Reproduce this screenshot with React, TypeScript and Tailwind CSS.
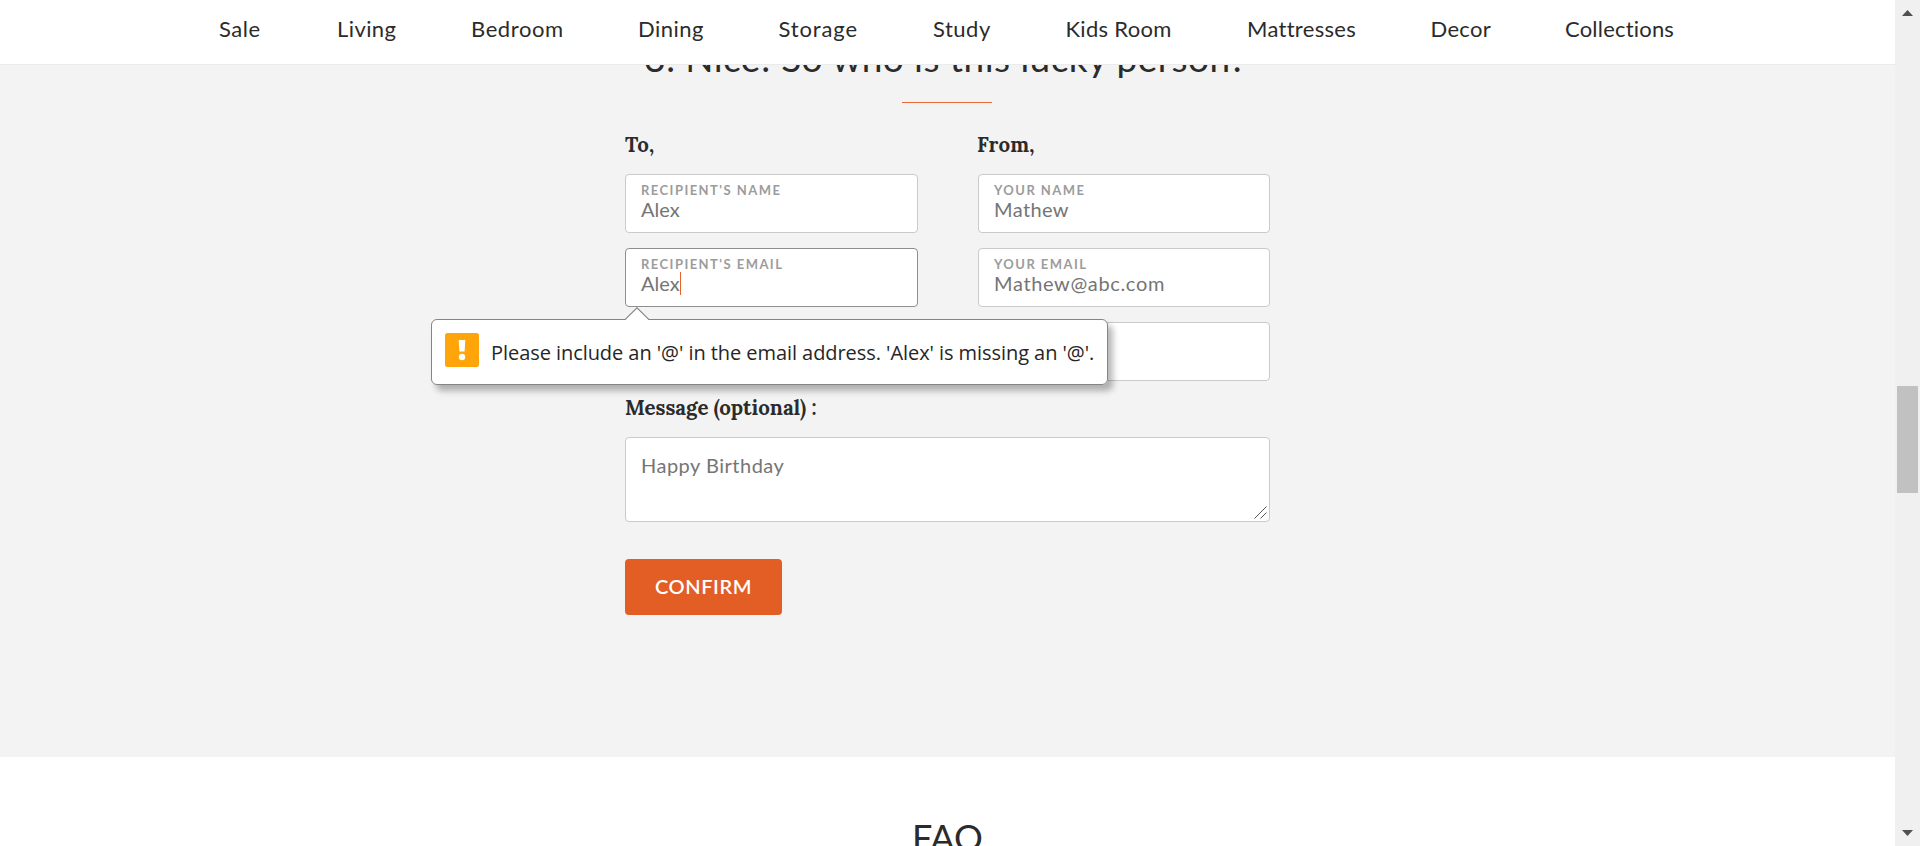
import React from "react";

const navItems = [
  { label: "Sale", cls: "w-[42px] tracking-[0.5px]" },
  { label: "Living", cls: "w-[58px] tracking-[0.4px]" },
  { label: "Bedroom", cls: "w-[91px] tracking-[0.6px]" },
  { label: "Dining", cls: "w-[64.5px] tracking-[0.5px]" },
  { label: "Storage", cls: "w-[78.5px] tracking-[0.85px]" },
  { label: "Study", cls: "w-[56.5px] tracking-[0.5px]" },
  { label: "Kids Room", cls: "w-[105.5px] tracking-[0.3px]" },
  { label: "Mattresses", cls: "w-[107.5px] tracking-[0.3px]" },
  { label: "Decor", cls: "w-[58.5px] tracking-[0.3px]" },
  { label: "Collections", cls: "w-[110px] tracking-[0.2px]" },
];

function Field({
  label,
  value,
  valueClass = "tracking-[0.4px]",
  focused = false,
  children,
}: {
  label: string;
  value: string;
  valueClass?: string;
  focused?: boolean;
  children?: React.ReactNode;
}) {
  return (
    <div
      className={`relative h-[59px] rounded-[4px] border bg-white pt-[7px] pl-[15px] ${
        focused ? "border-[#8e8e8e]" : "border-[#cacaca]"
      }`}
    >
      <div className="h-[15px] text-[13px] leading-4 font-bold tracking-[1.45px] whitespace-nowrap text-[#9c9c9c]">
        {label}
      </div>
      <div className="flex h-6 items-center text-[20px] leading-6 text-[#757575]">
        <span className={valueClass}>{value}</span>
        {focused && <span className="h-[23px] w-px bg-[#e8622c]" />}
      </div>
      {children}
    </div>
  );
}

function ValidationBubble() {
  return (
    <div className="absolute top-[70px] -left-[195px] z-20 flex h-[66px] w-[677px] items-start rounded-[6px] border border-[#858585] bg-white/[0.985] pt-[13px] pl-[13px] shadow-[5px_6px_6px_rgba(0,0,0,0.28)]">
      <svg className="absolute -top-[13px] left-[192px]" width="26" height="14" viewBox="0 0 26 14">
        <path d="M1 13.2 L13 1 L25 13.2 V14 H1 Z" fill="#fff" />
        <path d="M1 12.7 L13 0.8 L25 12.7" fill="none" stroke="#858585" strokeWidth="1.1" />
      </svg>
      <svg width="34" height="34" viewBox="0 0 34 34">
        <rect width="34" height="34" rx="2.5" fill="#ffa409" />
        <path d="M13.7 7 H20.3 L19.6 18.6 H14.4 Z" fill="#fff" />
        <circle cx="17" cy="24" r="3.2" fill="#fff" />
      </svg>
      <p className="ml-3 h-[34px] pt-[6px] font-['Open_Sans',sans-serif] text-[20px] leading-[28px] tracking-[-0.06px] whitespace-nowrap text-[#262626]">
        Please include an '@' in the email address. 'Alex' is missing an '@'.
      </p>
    </div>
  );
}

function Scrollbar() {
  return (
    <div className="flex h-full w-[25px] shrink-0 flex-col items-center bg-[#f0f0f0]">
      <svg className="mt-[10px] h-[6px] w-[11px]" viewBox="0 0 11 6">
        <path d="M0 6 L5.5 0 L11 6 Z" fill="#505050" />
      </svg>
      <div className="mt-[370px] h-[107px] w-[21px] bg-[#c1c1c1]" />
      <svg className="mt-auto mb-[10px] h-[6px] w-[11px]" viewBox="0 0 11 6">
        <path d="M0 0 L5.5 6 L11 0 Z" fill="#505050" />
      </svg>
    </div>
  );
}

export default function App() {
  return (
    <div className="flex h-[846px] w-[1920px] overflow-hidden bg-white font-[Lato,sans-serif] text-[#2b2b2b]">
      <main className="flex h-full w-[1895px] flex-col overflow-hidden">
        <nav className="relative z-10 flex h-[65px] shrink-0 gap-[76px] border-b border-[#ebebeb] bg-white pt-[15px] pl-[219px] text-[22px] leading-[28px] whitespace-nowrap">
          {navItems.map((item) => (
            <a key={item.label} className={item.cls}>
              {item.label}
            </a>
          ))}
        </nav>

        <section className="h-[692px] shrink-0 bg-[#f3f3f3]">
          <h2 className="-mt-[29px] mr-1 text-center text-[37px] leading-[44px] tracking-[0.45px]">
            3. Nice! So who is this lucky person?
          </h2>
          <div className="ml-[902px] mt-[22px] h-px w-[90px] bg-[#e8693a]" />

          <form className="mx-auto w-[645px] pt-[28px]">
            <div className="grid grid-cols-[293px_292px] justify-between">
              <div>
                <h3 className="mb-[15px] font-[Lora,serif] text-[20.5px] leading-[28px] font-bold">To,</h3>
                <div className="flex flex-col gap-[15px]">
                  <Field label="RECIPIENT'S NAME" value="Alex" valueClass="tracking-normal" />
                  <Field label="RECIPIENT'S EMAIL" value="Alex" valueClass="tracking-normal" focused>
                    <ValidationBubble />
                  </Field>
                </div>
              </div>
              <div>
                <h3 className="mb-[15px] -ml-px font-[Lora,serif] text-[20.5px] leading-[28px] font-bold tracking-[0.2px]">
                  From,
                </h3>
                <div className="flex flex-col gap-[15px]">
                  <Field label="YOUR NAME" value="Mathew" />
                  <Field label="YOUR EMAIL" value="Mathew@abc.com" valueClass="tracking-[0.65px]" />
                  <Field label="YOUR MOBILE" value="9876543210" valueClass="tracking-[-1.2px]" />
                </div>
              </div>
            </div>

            <h3 className="mt-[13px] mb-[15px] font-[Lora,serif] text-[20.5px] leading-[28px] font-bold">
              Message (optional) :
            </h3>
            <div className="relative h-[85px] rounded-[4px] border border-[#cacaca] bg-white pt-[15px] pl-[15px] text-[20px] leading-[24px] tracking-[0.5px] text-[#757575]">
              Happy Birthday
              <svg className="absolute right-[2px] bottom-[2px]" width="13" height="13" viewBox="0 0 13 13">
                <path d="M0.5 12.5 L12.5 0.5 M6.5 12.5 L12.5 6.5" stroke="#555" strokeWidth="1" />
              </svg>
            </div>
            <button
              type="button"
              className="mt-[37px] flex h-[56px] w-[157px] items-center justify-center rounded-[4px] bg-[#e35e25] pb-[2px] text-[20px] font-semibold tracking-[0.6px] text-white"
            >
              CONFIRM
            </button>
          </form>
        </section>

        <section className="pt-[58px] text-center">
          <h2 className="text-[36px] leading-[44px]">FAQ</h2>
        </section>
      </main>
      <Scrollbar />
    </div>
  );
}
